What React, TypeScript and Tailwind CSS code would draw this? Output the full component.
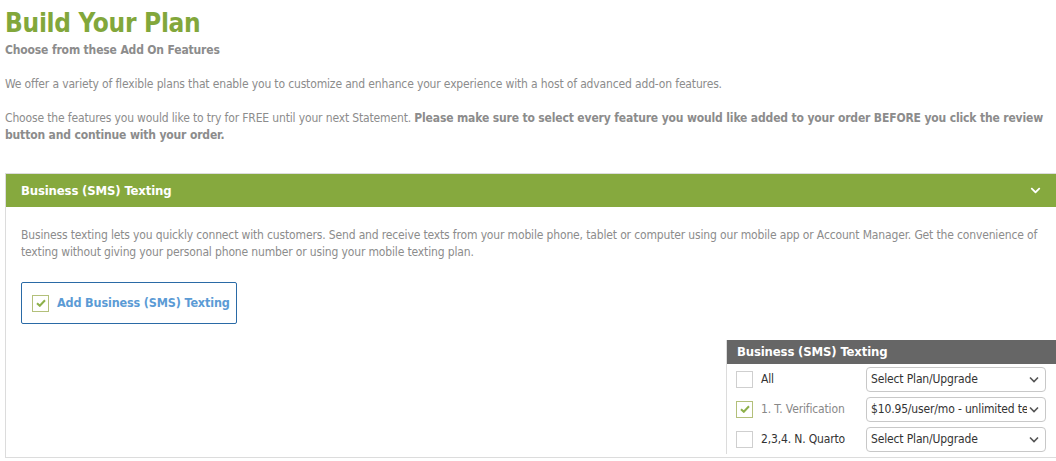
import { FaChevronDown } from "react-icons/fa"

const font = { fontFamily: 'Tahoma, "DejaVu Sans Condensed", "DejaVu Sans", sans-serif' }

const Check = ({ checked }: { checked: boolean }) => (
  <span
    className={`flex h-[17px] w-[17px] shrink-0 items-center justify-center border ${
      checked ? "border-[#b3c07a]" : "border-[#cfcfcf]"
    } bg-white`}
  >
    {checked && (
      <svg width="10" height="8" viewBox="0 0 10 8">
        <path d="M1 4.2 L3.8 6.8 L9 1.2" fill="none" stroke="#8db04a" strokeWidth="2" />
      </svg>
    )}
  </span>
)

const PlanSelect = ({ value }: { value: string }) => (
  <div className="flex h-[25px] w-[180px] items-center overflow-hidden rounded-[4px] border border-[#c8c8c8] bg-white pl-[4px] pr-[6px]">
    <span className="flex-1 overflow-hidden whitespace-nowrap text-[12px] tracking-[-0.15px] text-[#333]">{value}</span>
    <svg width="10" height="7" viewBox="0 0 10 7" className="ml-[2px] shrink-0">
      <path d="M1 1.5 L5 5.5 L9 1.5" fill="none" stroke="#555" strokeWidth="1.6" />
    </svg>
  </div>
)

const rows = [
  { label: "All", checked: false, value: "Select Plan/Upgrade", color: "text-[#333]" },
  { label: "1. T. Verification", checked: true, value: "$10.95/user/mo - unlimited texts", color: "text-[#888]" },
  { label: "2,3,4. N. Quarto", checked: false, value: "Select Plan/Upgrade", color: "text-[#333]" },
]

export default function App() {
  return (
    <div className="h-[461px] w-full overflow-hidden bg-white pl-[5px] tracking-[-0.15px]" style={font}>
      <h1 className="pt-[6px] text-[26px] font-bold leading-[34px] tracking-[-0.3px] text-[#82a73b]">Build Your Plan</h1>
      <p className="mt-[2px] text-[12px] font-bold leading-[16px] text-[#8c8c8c]">Choose from these Add On Features</p>
      <p className="mt-[18px] text-[12px] leading-[17px] text-[#8c8c8c]">
        We offer a variety of flexible plans that enable you to customize and enhance your experience with a host of advanced add-on features.
      </p>
      <p className="mt-[17px] w-[1051px] text-[12px] leading-[17px] text-[#8c8c8c]">
        Choose the features you would like to try for FREE until your next Statement.{" "}
        <b>Please make sure to select every feature you would like added to your order BEFORE you click the review button and continue with your order.</b>
      </p>

      <div className="mt-[29px] w-[1060px] border border-[#dcdcdc]">
        <div className="mr-[1px] flex h-[33px] items-center justify-between bg-[#86a93e] pl-[15px] pr-[18px]">
          <span className="text-[13px] font-bold text-white">Business (SMS) Texting</span>
          <FaChevronDown className="mr-[4px] text-[11px] text-white" />
        </div>
        <div className="pb-[3px] pl-[15px]">
          <p className="w-[1025px] pt-[20px] text-[12px] leading-[17px] text-[#8c8c8c]">
            Business texting lets you quickly connect with customers. Send and receive texts from your mobile phone, tablet or computer using our mobile app or Account Manager. Get the convenience of texting without giving your personal phone number or using your mobile texting plan.
          </p>
          <div className="mt-[21px] flex h-[42px] w-[216px] items-center gap-[8px] rounded-[2px] border border-[#2a6aa6] pl-[10px]">
            <Check checked />
            <span className="text-[12.5px] font-bold text-[#5b9bd5]">Add Business (SMS) Texting</span>
          </div>
          <div className="ml-[705px] mt-[16px] w-[340px] border-l border-[#dcdcdc]">
            <div className="flex h-[24px] items-center bg-[#666] pl-[10px] text-[13px] font-bold text-white">
              Business (SMS) Texting
            </div>
            {rows.map((r) => (
              <div key={r.label} className="flex h-[30px] items-center pl-[9px]">
                <Check checked={r.checked} />
                <span className={`ml-[8px] w-[105px] whitespace-nowrap text-[12px] ${r.color}`}>{r.label}</span>
                <PlanSelect value={r.value} />
              </div>
            ))}
          </div>
        </div>
      </div>
    </div>
  )
}
